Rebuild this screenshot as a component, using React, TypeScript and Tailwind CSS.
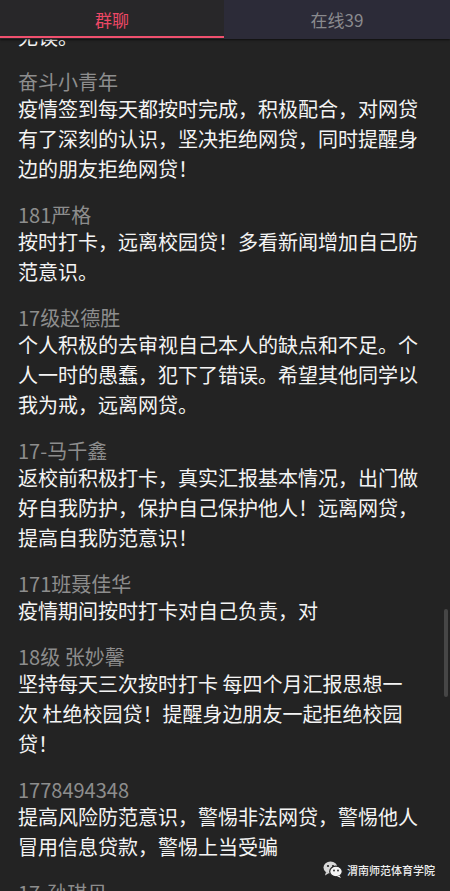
import React from "react";

const msgs: { name: string; text?: string }[] = [
  { name: "奋斗小青年", text: "疫情签到每天都按时完成，积极配合，对网贷有了深刻的认识，坚决拒绝网贷，同时提醒身边的朋友拒绝网贷！" },
  { name: "181严格", text: "按时打卡，远离校园贷！多看新闻增加自己防范意识。" },
  { name: "17级赵德胜", text: "个人积极的去审视自己本人的缺点和不足。个人一时的愚蠢，犯下了错误。希望其他同学以我为戒，远离网贷。" },
  { name: "17-马千鑫", text: "返校前积极打卡，真实汇报基本情况，出门做好自我防护，保护自己保护他人！远离网贷，提高自我防范意识！" },
  { name: "171班聂佳华", text: "疫情期间按时打卡对自己负责，对" },
  { name: "18级 张妙馨", text: "坚持每天三次按时打卡 每四个月汇报思想一次 杜绝校园贷！提醒身边朋友一起拒绝校园贷！" },
  { name: "1778494348", text: "提高风险防范意识，警惕非法网贷，警惕他人冒用信息贷款，警惕上当受骗" },
  { name: "17-孙琪贝" },
];

export default function App() {
  return (
    <div
      className="relative w-[450px] h-[891px] overflow-hidden bg-[#232323]"
      style={{ fontFamily: '"Microsoft YaHei", "Noto Sans CJK SC", "Noto Sans", sans-serif' }}
    >
      {/* tabs */}
      <div className="relative z-10 flex h-[39px] shadow-[0_1px_2px_rgba(0,0,0,0.6)]">
        <div className="relative flex w-[224px] items-center justify-center bg-[#282729] text-[17px] text-[#ee4866]">
          <span>群聊</span>
          <div className="absolute bottom-[1px] left-0 h-[2px] w-full bg-[#f0506e]" />
        </div>
        <div className="flex flex-1 items-center justify-center bg-[#2c2b38] text-[17px] text-[#8a8a8e]">
          <span>在线39</span>
        </div>
      </div>

      {/* content */}
      <div className="-mt-[17px] pl-[18px] w-[420px]">
        <div className="text-[20px] leading-[30px] text-[#f4f4f4]">无误。</div>
        {msgs.map((m, i) => (
          <div key={i} className={i === 0 ? "mt-[18px]" : "mt-[19px]"}>
            <div className="text-[20px] leading-[24px] text-[#8d8d8d]">{m.name}</div>
            {m.text && (
              <div className="text-[20px] leading-[30px] text-[#f4f4f4]">{m.text}</div>
            )}
          </div>
        ))}
      </div>

      {/* scrollbar */}
      <div className="absolute right-[2px] top-[609px] h-[88px] w-[4px] rounded-full bg-[#464646]" />

      {/* watermark */}
      <div className="absolute left-[323px] top-[861px] flex items-center gap-[4px]">
        <svg width="20" height="17" viewBox="0 0 20 17">
          <ellipse cx="7.5" cy="6.5" rx="7" ry="6" fill="#d8d8d8" />
          <path d="M3 11 L2 14.5 L6 12 Z" fill="#d8d8d8" />
          <circle cx="5" cy="5" r="1.1" fill="#232323" />
          <circle cx="10" cy="5" r="1.1" fill="#232323" />
          <ellipse cx="13" cy="10.5" rx="6.3" ry="5.3" fill="#f4f4f4" stroke="#232323" strokeWidth="1.2" />
          <path d="M16.5 14.5 L18 17 L14 15.3 Z" fill="#f4f4f4" />
          <circle cx="11" cy="9.5" r="0.9" fill="#232323" />
          <circle cx="15" cy="9.5" r="0.9" fill="#232323" />
        </svg>
        <span className="text-[11px] leading-[14px] text-[#eeeeee] font-medium">渭南师范体育学院</span>
      </div>
    </div>
  );
}
